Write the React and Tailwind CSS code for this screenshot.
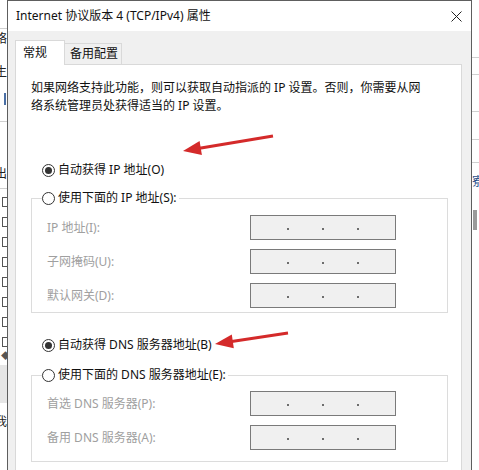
import React from "react";

// Campo de dirección IP deshabilitado (cuatro octetos)
const IpBox = () => (
    <div className="w-[146px] h-[25px] border border-[#7a7a7a] bg-[#f0f0f0] flex items-center justify-center gap-[33px] pt-[3px]">
        <span className="w-[2px] h-[2px] bg-[#6d6d6d]" />
        <span className="w-[2px] h-[2px] bg-[#6d6d6d]" />
        <span className="w-[2px] h-[2px] bg-[#6d6d6d]" />
    </div>
);

const Radio = ({ checked }) => (
    <span className="w-[13px] h-[13px] rounded-full border border-[#333] bg-white flex items-center justify-center shrink-0">
        {checked && <span className="w-[7px] h-[7px] rounded-full bg-[#333]" />}
    </span>
);

const RadioRow = ({ checked, label }) => (
    <div className="flex items-center h-[18px] gap-[3px]">
        <Radio checked={checked} />
        <span className="text-[#111] whitespace-nowrap">{label}</span>
    </div>
);

const FieldRow = ({ label }) => (
    <div className="flex items-center h-[25px]">
        <span className="w-[203px] text-[#a0a0a0] whitespace-nowrap">{label}</span>
        <IpBox />
    </div>
);

const GroupBox = ({ legend, rows, top, bottom }) => (
    <fieldset className="w-[417px] border border-[#dcdcdc] p-0 m-0">
        <legend className="ml-[10px] pr-[2px] bg-white">
            <RadioRow checked={false} label={legend} />
        </legend>
        <div className={`pl-[15px] flex flex-col gap-[9px] ${top} ${bottom}`}>
            {rows.map((r) => (
                <FieldRow key={r} label={r} />
            ))}
        </div>
    </fieldset>
);

// Casillas visibles de la lista de la ventana de fondo
const bgChecks = [0, 1, 2, 3, 4, 5, 6, 7];

export default function App() {
    return (
        <div className="relative w-[479px] h-[470px] overflow-hidden bg-white text-[12px] leading-[18px] font-['Noto_Sans','Noto_Sans_CJK_SC',sans-serif]">
            {/* Ventana de fondo: franjas visibles a izquierda y derecha */}
            <div className="absolute inset-0 flex justify-between text-[#222]">
                <div className="w-[8px] overflow-hidden flex flex-col">
                    <div className="h-[29px] border-b border-[#d0d0d0]" />
                    <div className="h-[34px] -ml-[5px] pt-[1px]">络</div>
                    <div className="h-[26px] -ml-[5px]">生</div>
                    <div className="h-[32px] pl-[4px] pt-[4px]">
                        <div className="w-[2px] h-[12px] bg-[#4a6fa5]" />
                    </div>
                    <div className="h-[44px] border-t border-[#d0d0d0]" />
                    <div className="h-[23px] -ml-[5px]">出</div>
                    <div className="flex flex-col gap-[10px] pl-[2px] pt-[8px] border-t border-[#d0d0d0]">
                        {bgChecks.map((i) => (
                            <span key={i} className="w-[6px] h-[10px] border border-[#555] bg-white" />
                        ))}
                    </div>
                    <div className="h-[18px] pl-[1px] text-[9px] text-[#555]">◆</div>
                    <div className="h-[38px] bg-[#e6e6e6]" />
                    <div className="h-[20px] -ml-[5px] mt-[10px]">我</div>
                </div>
                <div className="w-[7px] overflow-hidden flex flex-col">
                    <div className="h-[58px] border-b border-[#d0d0d0]" />
                    <div className="h-[17px] border-b border-[#d0d0d0]" />
                    <div className="h-[37px] border-b border-[#d0d0d0]" />
                    <div className="h-[28px] border-b border-[#d0d0d0]" />
                    <div className="h-[23px] border-b border-[#d0d0d0]" />
                    <div className="h-[38px] text-[#2a4f8a] pt-[10px]">寮</div>
                    <div className="h-[20px] w-[4px] ml-[1px] mt-[9px] bg-[#9a9a9a]" />
                </div>
            </div>

            {/* Diálogo de propiedades */}
            <div className="absolute left-[7px] top-0 w-[465px] h-[490px] border border-[#5e5e5e] bg-[#f0f0f0] flex flex-col">
                {/* Barra de título */}
                <div className="h-[30px] bg-white flex items-center justify-between pl-[8px] pr-[10px]">
                    <span className="text-[#111] whitespace-nowrap">Internet 协议版本 4 (TCP/IPv4) 属性</span>
                    <svg width="11" height="11" viewBox="0 0 11 11" className="mr-[-1px]">
                        <path d="M0.5 0.5 L10.5 10.5 M10.5 0.5 L0.5 10.5" stroke="#222" strokeWidth="1" />
                    </svg>
                </div>

                <div className="pt-[9px] pl-[7px]">
                    {/* Pestañas */}
                    <div className="flex items-end">
                        <div className="relative z-10 w-[50px] h-[25px] -mb-px bg-white border border-b-0 border-[#d9d9d9] pl-[7px] pt-[3px] text-[#111]">
                            常规
                        </div>
                        <div className="w-[57px] h-[21px] border border-l-0 border-b-0 border-[#d9d9d9] bg-[#f0f0f0] pl-[5px] pt-px text-[#111]">
                            备用配置
                        </div>
                    </div>

                    {/* Panel general */}
                    <div className="w-[447px] h-[420px] bg-white border border-[#d9d9d9] pl-[15px] pt-[14px]">
                        <p className="text-[#111] whitespace-nowrap">
                            如果网络支持此功能，则可以获取自动指派的 IP 设置。否则，你需要从网
                            <br />
                            络系统管理员处获得适当的 IP 设置。
                        </p>

                        <div className="mt-[46px] ml-[11px]">
                            <RadioRow checked label="自动获得 IP 地址(O)" />
                        </div>
                        <div className="mt-[10px]">
                            <GroupBox
                                legend="使用下面的 IP 地址(S):"
                                rows={["IP 地址(I):", "子网掩码(U):", "默认网关(D):"]}
                                top="pt-[8px]"
                                bottom="pb-[4px]"
                            />
                        </div>

                        <div className="mt-[23px] ml-[11px]">
                            <RadioRow checked label="自动获得 DNS 服务器地址(B)" />
                        </div>
                        <div className="mt-[12px]">
                            <GroupBox
                                legend="使用下面的 DNS 服务器地址(E):"
                                rows={["首选 DNS 服务器(P):", "备用 DNS 服务器(A):"]}
                                top="pt-[7px]"
                                bottom="pb-[11px]"
                            />
                        </div>
                    </div>
                </div>
            </div>

            {/* Flechas rojas de anotación */}
            <svg className="absolute inset-0 pointer-events-none" width="479" height="470">
                <line x1="273" y1="136" x2="198" y2="148.5" stroke="#d42a2a" strokeWidth="3" />
                <polygon points="183,151 201.9,155 199.6,141.1" fill="#d42a2a" />
                <line x1="288" y1="333" x2="230" y2="341.7" stroke="#d42a2a" strokeWidth="3" />
                <polygon points="215,344 233.8,348.2 231.8,334.4" fill="#d42a2a" />
            </svg>
        </div>
    );
}
